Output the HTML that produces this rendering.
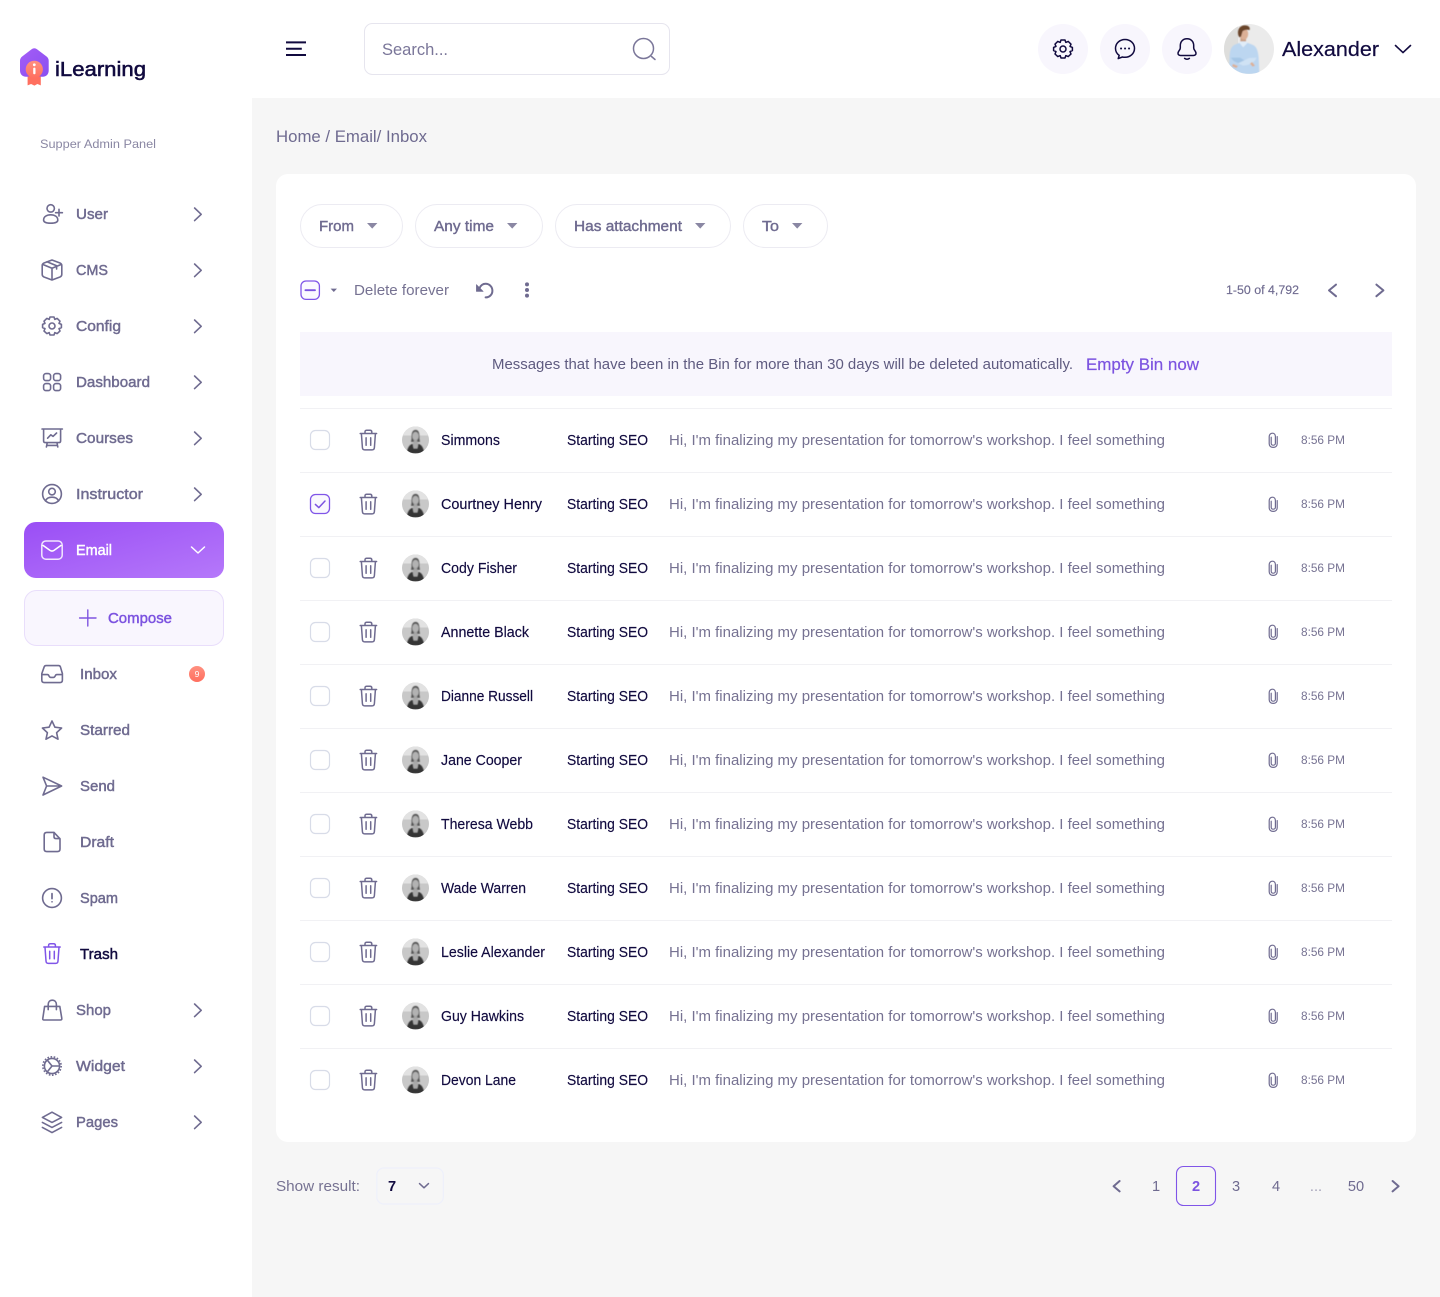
<!DOCTYPE html>
<html lang="en"><head><meta charset="utf-8"><title>iLearning - Trash</title>
<style>
html,body{margin:0;padding:0;background:#f6f6f6}
body{width:1440px;height:1297px;overflow:hidden}
svg{display:block}
text{font-family:"Liberation Sans",Arial,sans-serif}
.nav{font-size:14.6px;fill:#6f6b90;stroke:#6f6b90;stroke-width:.45}
.nm{font-size:14.4px;fill:#110a3f;stroke:#110a3f;stroke-width:.15}
.sb{font-size:14.4px;fill:#110a3f;stroke:#110a3f;stroke-width:.15}
.msg{font-size:14.4px;fill:#767292}
.tm{font-size:12.4px;fill:#767292}
.ic{fill:none;stroke:#6f6b90;stroke-width:1.6;stroke-linecap:round;stroke-linejoin:round}
.flt{font-size:14.6px;fill:#6f6b90;stroke:#6f6b90;stroke-width:.4}
.pg{font-size:14.6px;fill:#6f6b90}
</style></head><body>
<svg width="1440" height="1297" viewBox="0 0 1440 1297" xmlns="http://www.w3.org/2000/svg">
<defs>
<linearGradient id="eg" x1="0" y1="0" x2="1" y2="1"><stop offset="0" stop-color="#9a4ef5"/><stop offset="1" stop-color="#b578fa"/></linearGradient>
<linearGradient id="lg" x1="0" y1="0" x2="1" y2="1"><stop offset="0" stop-color="#a45df7"/><stop offset="1" stop-color="#8a4ff0"/></linearGradient>
<linearGradient id="og" x1="0" y1="0" x2="0" y2="1"><stop offset="0" stop-color="#ff9080"/><stop offset="1" stop-color="#ff6f5f"/></linearGradient>
<filter id="b1" x="-20%" y="-20%" width="140%" height="140%"><feGaussianBlur stdDeviation=".5"/></filter>
<clipPath id="ac"><circle cx="13.5" cy="13.5" r="13.5"/></clipPath>
<clipPath id="hc"><circle cx="1249" cy="49" r="25"/></clipPath>
<path id="chev" d="M0 0L6.6 6.3L0 12.6" fill="none" stroke="#6f6b90" stroke-width="1.6" stroke-linecap="round" stroke-linejoin="round"/>
<g id="tr" fill="none" stroke="#6f6b90" stroke-width="1.5" stroke-linecap="round" stroke-linejoin="round">
<path d="M0.8 4H17.2M5.6 3.8V2.4C5.6 1.2 6.4.7 7.4.7H10.6C11.6.7 12.4 1.2 12.4 2.4V3.8"/>
<path d="M2 4.2L3 18C3.1 19.6 4 20.4 5.4 20.4H12.6C14 20.4 14.9 19.6 15 18L16 4.2"/>
<path d="M6.7 8.2V15.8M11.3 8.2V15.8"/>
</g>
<g id="clip"><path d="M9.4 4.4V11.6C9.4 13.8 7.8 15.2 5.4 15.2C3 15.2 1.4 13.8 1.4 11.6V4.4C1.4 2.4 2.8 1 4.6 1C6.4 1 7.6 2.4 7.6 4.4V11C7.6 12.2 6.6 13 5.4 13C4.2 13 3.4 12.2 3.4 11V5" fill="none" stroke="#6f6b90" stroke-width="1.2" stroke-linecap="round"/></g>
<g id="av"><g clip-path="url(#ac)"><rect width="27" height="27" fill="#c8c8c8"/>
<rect width="27" height="9" fill="#e2e2e2"/>
<g filter="url(#b1)"><path d="M9.6 12C9.2 6 10.8 3.4 13.6 3.4C16.4 3.4 17.8 6 17.4 12L18 15.4H9Z" fill="#555"/>
<ellipse cx="13.5" cy="9.6" rx="3.2" ry="4.4" fill="#b2b2b2"/>
<rect x="11.8" y="13" width="3.4" height="4" fill="#a4a4a4"/>
<path d="M4.6 27C5.4 21.6 7 19 9.6 17.6L10.8 17.4L11.4 21H15.6L16.2 17.4L17.4 17.6C20 19 21.6 21.6 22.4 27Z" fill="#343434"/>
<path d="M10.8 17L11.6 22H15.4L16.2 17L15.6 15.6H11.4Z" fill="#a9a9a9"/></g></g></g>
<rect id="cb" x="0" y="0" width="19" height="19" rx="5" fill="#fff" stroke="#d8dce8" stroke-width="1.2"/>
</defs>

<rect width="1440" height="1297" fill="#f6f6f6"/>
<rect width="252" height="1297" fill="#fff"/>
<rect width="1440" height="98" fill="#fff"/>

<!-- logo -->
<path d="M31.6 49.3C33.3 47.9 35.3 47.9 37 49.3L46.4 56.4C47.9 57.5 48.7 59 48.7 60.8V70.5C48.7 74.2 46.3 76.7 42.7 76.7H26C22.4 76.7 20 74.2 20 70.5V60.8C20 59 20.8 57.5 22.3 56.4Z" fill="url(#lg)"/>
<path d="M27.6 76.5H40.8V85.4L37.4 84L34.4 85.6L31.1 84L27.6 85.4Z" fill="#ff6f5f"/>
<circle cx="34.3" cy="69.3" r="8.6" fill="url(#og)"/>
<rect x="33.2" y="67.6" width="2.3" height="6.6" rx="1" fill="#fff"/><circle cx="34.3" cy="64.8" r="1.4" fill="#fff"/>
<text x="55" y="76" font-size="20.5" fill="#110a3f" stroke="#110a3f" stroke-width=".55" textLength="91" lengthAdjust="spacingAndGlyphs">iLearning</text>
<text x="40" y="148" font-size="12.4" fill="#8a87a3" textLength="116" lengthAdjust="spacingAndGlyphs">Supper Admin Panel</text>

<!-- header -->
<path d="M286 42.4H306M286 48.7H301.8M286 55H306" stroke="#110a3f" stroke-width="2" fill="none"/>
<rect x="364.5" y="23.5" width="305" height="51" rx="8" fill="#fff" stroke="#e6e5ee"/>
<text x="382" y="55" font-size="16.4" fill="#7a7699" textLength="66" lengthAdjust="spacingAndGlyphs">Search...</text>
<circle cx="643.5" cy="48.5" r="10" fill="none" stroke="#7a7699" stroke-width="1.5"/><path d="M651.5 56.5L655 59.5" stroke="#7a7699" stroke-width="1.5" stroke-linecap="round"/>
<circle cx="1063" cy="49" r="25" fill="#f8f6fd"/><circle cx="1125" cy="49" r="25" fill="#f8f6fd"/><circle cx="1187" cy="49" r="25" fill="#f8f6fd"/>
<g fill="none" stroke="#110a3f" stroke-width="1.5" stroke-linecap="round" stroke-linejoin="round">
<g transform="translate(1011,-277)"><circle cx="52" cy="326" r="3"/><path d="M50 317H54L54.8 319.4L57.2 318.4L60 321.2L59 323.4L61.4 324.4V327.6L59 328.6L60 331L57.2 333.6L54.8 332.6L54 335H50L49.2 332.6L46.8 333.6L44 331L45 328.6L42.6 327.6V324.4L45 323.4L44 321.2L46.8 318.4L49.2 319.4Z"/></g>
<path d="M1125 39.5C1119.6 39.5 1115.5 43.4 1115.5 48.4C1115.5 51.3 1116.9 53.8 1119.2 55.4L1118.2 58.6L1122.4 57C1123.2 57.2 1124.1 57.3 1125 57.3C1130.4 57.3 1134.5 53.4 1134.5 48.4C1134.5 43.4 1130.4 39.5 1125 39.5Z"/>
<path d="M1121 48.5H1121.1M1125 48.5H1125.1M1129 48.5H1129.1" stroke-width="2"/>
<path d="M1187 38.8C1182.8 38.8 1180.3 41.8 1180.3 45.6V48C1180.3 50 1178.2 51 1178 53C1177.9 54.6 1179 55.5 1180.6 55.5H1193.4C1195 55.5 1196.1 54.6 1196 53C1195.8 51 1193.7 50 1193.7 48V45.6C1193.7 41.8 1191.2 38.8 1187 38.8Z"/>
<path d="M1184.6 58.4C1186 59.4 1188 59.4 1189.4 58.4"/>
</g>
<g clip-path="url(#hc)">
<rect x="1224" y="24" width="50" height="50" fill="#ebebeb"/>
<rect x="1224" y="24" width="14" height="50" fill="#dededc"/>
<g filter="url(#b1)">
<path d="M1229 74L1229.6 56C1230 49 1232 45.6 1235.6 44.4L1240.6 42.4L1246.4 42.4L1253 45C1256.6 46.6 1258 51 1258.6 57L1259.4 74Z" fill="#bcd6f0"/>
<rect x="1240.4" y="37" width="5.6" height="7.4" fill="#c99f84"/>
<path d="M1239.2 42.8L1243.2 47.4L1247.6 42.8L1246 41.4H1240.6Z" fill="#e0ecf8"/>
<ellipse cx="1244" cy="34" rx="4.2" ry="5.6" fill="#dcb096"/>
<path d="M1238.4 35.6C1236.8 29.4 1240 25.4 1245 25.4C1249 25.4 1250.4 27.8 1249.6 30C1247 29.4 1244.4 29.8 1242.6 31.2L1241 36.6L1239.4 37.4Z" fill="#6a452c"/>
<path d="M1231 57.6C1233 61.6 1238 63.6 1245 64.6L1250 63.6L1240 57.6Z" fill="#a5c6e6"/>
<path d="M1256.6 57.6C1255 62 1250 65.4 1243 65.6L1238 63.4L1249 58Z" fill="#cfe2f4"/>
<path d="M1233 64L1238 66L1236.4 68L1232 66.4Z" fill="#dcb096"/>
<path d="M1252 62L1255 65.6L1252.6 66.6L1250 63.6Z" fill="#dcb096"/>
</g></g>
<text x="1282" y="56" font-size="20.4" fill="#110a3f" stroke="#110a3f" stroke-width=".2" textLength="97" lengthAdjust="spacingAndGlyphs">Alexander</text>
<path d="M1395.5 45.5L1403 52.6L1410.5 45.5" fill="none" stroke="#110a3f" stroke-width="1.6" stroke-linecap="round" stroke-linejoin="round"/>

<!-- sidebar items -->
<text class="nav" x="76" y="219" textLength="32" lengthAdjust="spacingAndGlyphs">User</text>
<text class="nav" x="76" y="275" textLength="32" lengthAdjust="spacingAndGlyphs">CMS</text>
<text class="nav" x="76" y="331" textLength="45" lengthAdjust="spacingAndGlyphs">Config</text>
<text class="nav" x="76" y="387" textLength="74" lengthAdjust="spacingAndGlyphs">Dashboard</text>
<text class="nav" x="76" y="443" textLength="57" lengthAdjust="spacingAndGlyphs">Courses</text>
<text class="nav" x="76" y="499" textLength="67" lengthAdjust="spacingAndGlyphs">Instructor</text>
<use href="#chev" x="194.6" y="208"/><use href="#chev" x="194.6" y="264"/><use href="#chev" x="194.6" y="320"/><use href="#chev" x="194.6" y="376"/><use href="#chev" x="194.6" y="432"/><use href="#chev" x="194.6" y="488"/>
<use href="#chev" x="194.6" y="1004"/><use href="#chev" x="194.6" y="1060"/><use href="#chev" x="194.6" y="1116"/>
<g class="ic">
<!-- user -->
<circle cx="50.7" cy="208.4" r="3.7"/><path d="M43.6 220C43.6 216.6 46.8 214.8 50.7 214.8C54.6 214.8 57.8 216.6 57.8 220C57.8 222.2 55.6 223.2 50.7 223.2C45.8 223.2 43.6 222.2 43.6 220Z"/><path d="M55.6 212.7H62.4M59 209.3V216"/>
<!-- cms -->
<path d="M52 260L60 263C61.4 263.6 61.8 264.4 61.8 265.6V274.4C61.8 275.6 61.4 276.4 60 277L52 280L44 277C42.6 276.4 42.2 275.6 42.2 274.4V265.6C42.2 264.4 42.6 263.6 44 263Z"/><path d="M42.6 264.4L52 268.2L61.4 264.4M52 268.2V279.6M47 261.8L56.6 265.8V269"/>
<!-- config -->
<circle cx="52" cy="326" r="3"/><path d="M50 317H54L54.8 319.4L57.2 318.4L60 321.2L59 323.4L61.4 324.4V327.6L59 328.6L60 331L57.2 333.6L54.8 332.6L54 335H50L49.2 332.6L46.8 333.6L44 331L45 328.6L42.6 327.6V324.4L45 323.4L44 321.2L46.8 318.4L49.2 319.4Z"/>
<!-- dashboard -->
<rect x="43.6" y="373.6" width="7" height="7" rx="2.4"/><rect x="53.6" y="373.6" width="7" height="7" rx="2.4"/><rect x="43.6" y="383.6" width="7" height="7" rx="2.4"/><rect x="53.6" y="383.6" width="7" height="7" rx="2.4"/>
<!-- courses -->
<path d="M42 429H62.4M43.6 429.4V441C43.6 442 44.2 442.6 45.2 442.6H59C60 442.6 60.6 442 60.6 441V429.4M47.2 442.8L46.4 447M57 442.8L57.8 447M46.8 445.4H57.4M47.6 438.2L50.8 434.8L53 436.4L56.6 433"/>
<!-- instructor -->
<circle cx="52" cy="494" r="9.4"/><circle cx="52" cy="491.6" r="3.3"/><path d="M45.6 501C46.4 498.4 49 497.2 52 497.2C55 497.2 57.6 498.4 58.4 501"/>
<!-- inbox -->
<path d="M46 665.6H58.6C59.6 665.6 60 666 60.4 666.8L62.4 673.6V680C62.4 681.8 61.6 682.6 60 682.6H44.2C42.6 682.6 41.8 681.8 41.8 680V673.6L44.2 666.8C44.6 666 45 665.6 46 665.6Z"/><path d="M42 674.6H47.4C48.4 674.6 48.6 675.2 49 676C49.4 676.8 50 677.4 50.8 677.4H53.4C54.2 677.4 54.8 676.8 55.2 676C55.6 675.2 55.8 674.6 56.8 674.6H62.2"/>
<!-- star -->
<path d="M52 721L54.9 727.2L61.6 728L56.6 732.7L58 739.2L52 735.9L46 739.2L47.4 732.7L42.4 728L49.1 727.2Z"/>
<!-- send -->
<path d="M43 777.2L61.6 786L43 795L46.6 786ZM46.6 786H61"/>
<!-- draft -->
<path d="M46.8 832.4H54L60 838.8V849C60 850.8 59 851.6 57.4 851.6H46.8C45.2 851.6 44.2 850.8 44.2 849V835C44.2 833.2 45.2 832.4 46.8 832.4Z"/><path d="M54 832.6V836.6C54 837.8 54.8 838.6 56 838.6H59.8"/>
<!-- spam -->
<circle cx="52" cy="898" r="9.4"/><path d="M52 893.6V898.6M52 901.8H52.05" stroke-width="1.7"/>
<!-- shop -->
<path d="M44.6 1006.4H59.8L61.8 1018.4C62 1019.4 61.4 1020 60.4 1020H44C43 1020 42.6 1019.4 42.8 1018.4Z"/><path d="M48.2 1009.6V1004.6C48.2 1002 49.8 1000.2 52.3 1000.2C54.8 1000.2 56.4 1002 56.4 1004.6V1009.6"/>
<!-- widget -->
<circle cx="52" cy="1066" r="7.6"/><circle cx="52" cy="1066" r="9.2" stroke-dasharray="1.6 1.6" stroke-linecap="butt"/><path d="M47.4 1060.2L52 1066L47.4 1071.8M52 1066H59.4"/>
<!-- pages -->
<path d="M52 1112.2L61.6 1117.4L52 1122.4L42.4 1117.4Z"/><path d="M42.4 1122.4L52 1127.4L61.6 1122.4M42.4 1127.4L52 1132.6L61.6 1127.4"/>
</g>

<rect x="24" y="522" width="200" height="56" rx="12" fill="url(#eg)"/>
<rect x="41.8" y="541" width="20.4" height="18.2" rx="4" fill="none" stroke="#fff" stroke-opacity=".85" stroke-width="1.5"/>
<path d="M43 545.4L50 550.4C51.2 551.2 52.8 551.2 54 550.4L61 545.4" fill="none" stroke="#fff" stroke-width="1.5" stroke-linecap="round"/>
<text x="76" y="555" font-size="14.6" fill="#fff" stroke="#fff" stroke-width=".45" textLength="36" lengthAdjust="spacingAndGlyphs">Email</text>
<path d="M191.5 547L198 553L204.5 547" fill="none" stroke="#fff" stroke-width="1.5" stroke-linecap="round" stroke-linejoin="round"/>

<rect x="24.5" y="590.5" width="199" height="55" rx="12" fill="#f9f6fe" stroke="#e9defb"/>
<path d="M79.6 618H96M87.8 610V626" stroke="#8055e0" stroke-width="1.4" stroke-linecap="round"/>
<text x="108" y="623" font-size="14.6" fill="#7c53e0" stroke="#7c53e0" stroke-width=".45" textLength="64" lengthAdjust="spacingAndGlyphs">Compose</text>

<text class="nav" x="80" y="679" textLength="37" lengthAdjust="spacingAndGlyphs">Inbox</text>
<circle cx="197" cy="674" r="8" fill="url(#og)"/><text x="197" y="677" font-size="8.5" fill="#fff" text-anchor="middle">9</text>
<text class="nav" x="80" y="735" textLength="50" lengthAdjust="spacingAndGlyphs">Starred</text>
<text class="nav" x="80" y="791" textLength="35" lengthAdjust="spacingAndGlyphs">Send</text>
<text class="nav" x="80" y="847" textLength="34" lengthAdjust="spacingAndGlyphs">Draft</text>
<text class="nav" x="80" y="903" textLength="38" lengthAdjust="spacingAndGlyphs">Spam</text>
<text x="80" y="959" font-size="14.6" fill="#110a3f" stroke="#110a3f" stroke-width=".45" textLength="38" lengthAdjust="spacingAndGlyphs">Trash</text>
<g transform="translate(43,943)" fill="none" stroke="#8055e8" stroke-width="1.5" stroke-linecap="round" stroke-linejoin="round">
<path d="M0.8 4H17.2M5.6 3.8V2.4C5.6 1.2 6.4.7 7.4.7H10.6C11.6.7 12.4 1.2 12.4 2.4V3.8"/>
<path d="M2 4.2L3 18C3.1 19.6 4 20.4 5.4 20.4H12.6C14 20.4 14.9 19.6 15 18L16 4.2"/>
<path d="M6.7 8.2V15.8M11.3 8.2V15.8"/></g>
<text class="nav" x="76" y="1015" textLength="35" lengthAdjust="spacingAndGlyphs">Shop</text>
<text class="nav" x="76" y="1071" textLength="49" lengthAdjust="spacingAndGlyphs">Widget</text>
<text class="nav" x="76" y="1127" textLength="42" lengthAdjust="spacingAndGlyphs">Pages</text>

<!-- main -->
<text x="276" y="142" font-size="16.4" fill="#6f6b90" textLength="151" lengthAdjust="spacingAndGlyphs">Home / Email/ Inbox</text>
<rect x="276" y="174" width="1140" height="968" rx="12" fill="#fff"/>

<g fill="#fff" stroke="#ecebf2"><rect x="300.5" y="204.5" width="102" height="43" rx="21.5"/><rect x="415.5" y="204.5" width="127" height="43" rx="21.5"/><rect x="555.5" y="204.5" width="175" height="43" rx="21.5"/><rect x="743.5" y="204.5" width="84" height="43" rx="21.5"/></g>
<text class="flt" x="319" y="231" textLength="35" lengthAdjust="spacingAndGlyphs">From</text>
<text class="flt" x="434" y="231" textLength="60" lengthAdjust="spacingAndGlyphs">Any time</text>
<text class="flt" x="574" y="231" textLength="108" lengthAdjust="spacingAndGlyphs">Has attachment</text>
<text class="flt" x="762" y="231" textLength="17" lengthAdjust="spacingAndGlyphs">To</text>
<g fill="#8a87a3"><path d="M367 223H377.4L372.2 228.6Z"/><path d="M507 223H517.4L512.2 228.6Z"/><path d="M695 223H705.4L700.2 228.6Z"/><path d="M792 223H802.4L797.2 228.6Z"/></g>

<rect x="301" y="281" width="18.4" height="18.4" rx="5" fill="#fbf9ff" stroke="#8055e8" stroke-width="1.3"/>
<path d="M305.4 290.2H315" stroke="#7c53e0" stroke-width="1.8" stroke-linecap="round"/>
<path d="M330.6 288.6H337L333.8 292Z" fill="#6f6b90"/>
<text x="354" y="295" font-size="14.4" fill="#767292" textLength="95" lengthAdjust="spacingAndGlyphs">Delete forever</text>
<path d="M479.6 288C481 285 483.2 283.8 485.6 283.8C489.4 283.8 492.4 286.9 492.4 290.7C492.4 294.5 489.4 297.4 485.6 297.4" fill="none" stroke="#6f6b90" stroke-width="2" stroke-linecap="round"/>
<path d="M476.4 284.6V291.4H483.2Z" fill="#6f6b90" stroke="#6f6b90" stroke-width=".6" stroke-linejoin="round"/>
<g fill="#6f6b90"><circle cx="527" cy="284.4" r="2"/><circle cx="527" cy="290" r="2"/><circle cx="527" cy="295.6" r="2"/></g>
<text x="1226" y="294" font-size="12.4" fill="#6f6b90" stroke="#6f6b90" stroke-width=".15" textLength="73" lengthAdjust="spacingAndGlyphs">1-50 of 4,792</text>
<path d="M1336 284.6L1329 290.4L1336 296.2M1376.4 284.6L1383.4 290.4L1376.4 296.2" fill="none" stroke="#6f6b90" stroke-width="2" stroke-linecap="round" stroke-linejoin="round"/>

<rect x="300" y="332" width="1092" height="64" fill="#f8f6fd"/>
<text x="492" y="369" font-size="14.4" fill="#5f5b80" textLength="581" lengthAdjust="spacingAndGlyphs">Messages that have been in the Bin for more than 30 days will be deleted automatically.</text>
<text x="1086" y="370" font-size="16.4" fill="#7c53e0" stroke="#7c53e0" stroke-width=".2" textLength="113" lengthAdjust="spacingAndGlyphs">Empty Bin now</text>

<!-- row dividers -->
<path d="M300 408.5H1392M300 472.5H1392M300 536.5H1392M300 600.5H1392M300 664.5H1392M300 728.5H1392M300 792.5H1392M300 856.5H1392M300 920.5H1392M300 984.5H1392M300 1048.5H1392" stroke="#f1f1f4"/>

<!-- row icons -->
<use href="#cb" x="310.5" y="430.5"/><use href="#cb" x="310.5" y="558.5"/><use href="#cb" x="310.5" y="622.5"/><use href="#cb" x="310.5" y="686.5"/><use href="#cb" x="310.5" y="750.5"/><use href="#cb" x="310.5" y="814.5"/><use href="#cb" x="310.5" y="878.5"/><use href="#cb" x="310.5" y="942.5"/><use href="#cb" x="310.5" y="1006.5"/><use href="#cb" x="310.5" y="1070.5"/>
<rect x="310.5" y="494.5" width="19" height="19" rx="5" fill="#faf8fe" stroke="#8055e8" stroke-width="1.3"/>
<path d="M315.4 504.4L318.8 507.6L325 501" fill="none" stroke="#7c53e0" stroke-width="1.5" stroke-linecap="round" stroke-linejoin="round"/>

<use href="#tr" x="359.4" y="429.5"/><use href="#tr" x="359.4" y="493.5"/><use href="#tr" x="359.4" y="557.5"/><use href="#tr" x="359.4" y="621.5"/><use href="#tr" x="359.4" y="685.5"/><use href="#tr" x="359.4" y="749.5"/><use href="#tr" x="359.4" y="813.5"/><use href="#tr" x="359.4" y="877.5"/><use href="#tr" x="359.4" y="941.5"/><use href="#tr" x="359.4" y="1005.5"/><use href="#tr" x="359.4" y="1069.5"/>

<use href="#av" x="402" y="426.5"/><use href="#av" x="402" y="490.5"/><use href="#av" x="402" y="554.5"/><use href="#av" x="402" y="618.5"/><use href="#av" x="402" y="682.5"/><use href="#av" x="402" y="746.5"/><use href="#av" x="402" y="810.5"/><use href="#av" x="402" y="874.5"/><use href="#av" x="402" y="938.5"/><use href="#av" x="402" y="1002.5"/><use href="#av" x="402" y="1066.5"/>

<use href="#clip" x="1267.8" y="432.2"/><use href="#clip" x="1267.8" y="496.2"/><use href="#clip" x="1267.8" y="560.2"/><use href="#clip" x="1267.8" y="624.2"/><use href="#clip" x="1267.8" y="688.2"/><use href="#clip" x="1267.8" y="752.2"/><use href="#clip" x="1267.8" y="816.2"/><use href="#clip" x="1267.8" y="880.2"/><use href="#clip" x="1267.8" y="944.2"/><use href="#clip" x="1267.8" y="1008.2"/><use href="#clip" x="1267.8" y="1072.2"/>

<!-- rows text -->
<text class="nm" x="441" y="445" textLength="59" lengthAdjust="spacingAndGlyphs">Simmons</text>
<text class="sb" x="567" y="445" textLength="81" lengthAdjust="spacingAndGlyphs">Starting SEO</text>
<text class="msg" x="669" y="445" textLength="496" lengthAdjust="spacingAndGlyphs">Hi, I'm finalizing my presentation for tomorrow's workshop. I feel something</text>
<text class="tm" x="1301" y="444" textLength="44" lengthAdjust="spacingAndGlyphs">8:56 PM</text>

<text class="nm" x="441" y="509" textLength="101" lengthAdjust="spacingAndGlyphs">Courtney Henry</text>
<text class="sb" x="567" y="509" textLength="81" lengthAdjust="spacingAndGlyphs">Starting SEO</text>
<text class="msg" x="669" y="509" textLength="496" lengthAdjust="spacingAndGlyphs">Hi, I'm finalizing my presentation for tomorrow's workshop. I feel something</text>
<text class="tm" x="1301" y="508" textLength="44" lengthAdjust="spacingAndGlyphs">8:56 PM</text>

<text class="nm" x="441" y="573" textLength="76" lengthAdjust="spacingAndGlyphs">Cody Fisher</text>
<text class="sb" x="567" y="573" textLength="81" lengthAdjust="spacingAndGlyphs">Starting SEO</text>
<text class="msg" x="669" y="573" textLength="496" lengthAdjust="spacingAndGlyphs">Hi, I'm finalizing my presentation for tomorrow's workshop. I feel something</text>
<text class="tm" x="1301" y="572" textLength="44" lengthAdjust="spacingAndGlyphs">8:56 PM</text>

<text class="nm" x="441" y="637" textLength="88" lengthAdjust="spacingAndGlyphs">Annette Black</text>
<text class="sb" x="567" y="637" textLength="81" lengthAdjust="spacingAndGlyphs">Starting SEO</text>
<text class="msg" x="669" y="637" textLength="496" lengthAdjust="spacingAndGlyphs">Hi, I'm finalizing my presentation for tomorrow's workshop. I feel something</text>
<text class="tm" x="1301" y="636" textLength="44" lengthAdjust="spacingAndGlyphs">8:56 PM</text>

<text class="nm" x="441" y="701" textLength="92" lengthAdjust="spacingAndGlyphs">Dianne Russell</text>
<text class="sb" x="567" y="701" textLength="81" lengthAdjust="spacingAndGlyphs">Starting SEO</text>
<text class="msg" x="669" y="701" textLength="496" lengthAdjust="spacingAndGlyphs">Hi, I'm finalizing my presentation for tomorrow's workshop. I feel something</text>
<text class="tm" x="1301" y="700" textLength="44" lengthAdjust="spacingAndGlyphs">8:56 PM</text>

<text class="nm" x="441" y="765" textLength="81" lengthAdjust="spacingAndGlyphs">Jane Cooper</text>
<text class="sb" x="567" y="765" textLength="81" lengthAdjust="spacingAndGlyphs">Starting SEO</text>
<text class="msg" x="669" y="765" textLength="496" lengthAdjust="spacingAndGlyphs">Hi, I'm finalizing my presentation for tomorrow's workshop. I feel something</text>
<text class="tm" x="1301" y="764" textLength="44" lengthAdjust="spacingAndGlyphs">8:56 PM</text>

<text class="nm" x="441" y="829" textLength="92" lengthAdjust="spacingAndGlyphs">Theresa Webb</text>
<text class="sb" x="567" y="829" textLength="81" lengthAdjust="spacingAndGlyphs">Starting SEO</text>
<text class="msg" x="669" y="829" textLength="496" lengthAdjust="spacingAndGlyphs">Hi, I'm finalizing my presentation for tomorrow's workshop. I feel something</text>
<text class="tm" x="1301" y="828" textLength="44" lengthAdjust="spacingAndGlyphs">8:56 PM</text>

<text class="nm" x="441" y="893" textLength="85" lengthAdjust="spacingAndGlyphs">Wade Warren</text>
<text class="sb" x="567" y="893" textLength="81" lengthAdjust="spacingAndGlyphs">Starting SEO</text>
<text class="msg" x="669" y="893" textLength="496" lengthAdjust="spacingAndGlyphs">Hi, I'm finalizing my presentation for tomorrow's workshop. I feel something</text>
<text class="tm" x="1301" y="892" textLength="44" lengthAdjust="spacingAndGlyphs">8:56 PM</text>

<text class="nm" x="441" y="957" textLength="104" lengthAdjust="spacingAndGlyphs">Leslie Alexander</text>
<text class="sb" x="567" y="957" textLength="81" lengthAdjust="spacingAndGlyphs">Starting SEO</text>
<text class="msg" x="669" y="957" textLength="496" lengthAdjust="spacingAndGlyphs">Hi, I'm finalizing my presentation for tomorrow's workshop. I feel something</text>
<text class="tm" x="1301" y="956" textLength="44" lengthAdjust="spacingAndGlyphs">8:56 PM</text>

<text class="nm" x="441" y="1021" textLength="83" lengthAdjust="spacingAndGlyphs">Guy Hawkins</text>
<text class="sb" x="567" y="1021" textLength="81" lengthAdjust="spacingAndGlyphs">Starting SEO</text>
<text class="msg" x="669" y="1021" textLength="496" lengthAdjust="spacingAndGlyphs">Hi, I'm finalizing my presentation for tomorrow's workshop. I feel something</text>
<text class="tm" x="1301" y="1020" textLength="44" lengthAdjust="spacingAndGlyphs">8:56 PM</text>

<text class="nm" x="441" y="1085" textLength="75" lengthAdjust="spacingAndGlyphs">Devon Lane</text>
<text class="sb" x="567" y="1085" textLength="81" lengthAdjust="spacingAndGlyphs">Starting SEO</text>
<text class="msg" x="669" y="1085" textLength="496" lengthAdjust="spacingAndGlyphs">Hi, I'm finalizing my presentation for tomorrow's workshop. I feel something</text>
<text class="tm" x="1301" y="1084" textLength="44" lengthAdjust="spacingAndGlyphs">8:56 PM</text>

<!-- footer -->
<text x="276" y="1191" font-size="14.4" fill="#767292" textLength="84" lengthAdjust="spacingAndGlyphs">Show result:</text>
<rect x="376.8" y="1168" width="66.5" height="36" rx="7" fill="#f6f6f6" stroke="#eef0fb" stroke-width="1.2"/>
<text x="388" y="1191" font-size="14.6" font-weight="700" fill="#110a3f">7</text>
<path d="M419.5 1183.6L424 1187.8L428.5 1183.6" fill="none" stroke="#6f6b90" stroke-width="1.5" stroke-linecap="round" stroke-linejoin="round"/>

<path d="M1119.6 1181L1113.6 1186.2L1119.6 1191.4M1392.6 1181L1398.6 1186.2L1392.6 1191.4" fill="none" stroke="#6f6b90" stroke-width="2" stroke-linecap="round" stroke-linejoin="round"/>
<rect x="1176.5" y="1166.5" width="39" height="39" rx="7" fill="none" stroke="#8055e8" stroke-width="1.1"/>
<text class="pg" x="1156" y="1191" text-anchor="middle">1</text>
<text x="1196" y="1191" font-size="14.6" font-weight="700" fill="#7c53e0" text-anchor="middle">2</text>
<text class="pg" x="1236" y="1191" text-anchor="middle">3</text>
<text class="pg" x="1276" y="1191" text-anchor="middle">4</text>
<text x="1316" y="1191" font-size="14.6" fill="#a3a1b8" text-anchor="middle">...</text>
<text class="pg" x="1356" y="1191" text-anchor="middle">50</text>
</svg>
</body></html>
